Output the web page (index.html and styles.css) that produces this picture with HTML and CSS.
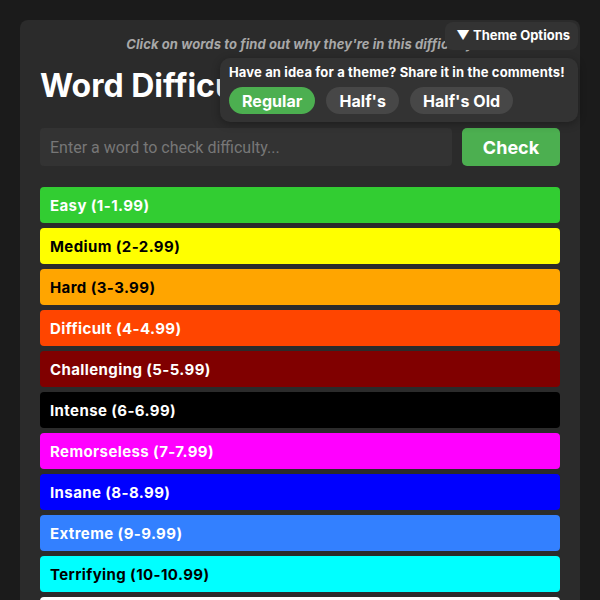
FILE: index.html
```html
<!DOCTYPE html>
<html>
<head>
<meta charset="utf-8">
<link rel="stylesheet" href="styles.css">
</head>
<body>
<div class="container">
  <p class="subtitle">Click on words to find out why they're in this difficulty</p>
  <h1 class="title">Word Difficulty</h1>
  <div class="search">
    <input class="search-input" type="text" placeholder="Enter a word to check difficulty...">
    <button class="check-btn">Check</button>
  </div>
  <div class="levels">
    <div class="level easy">Easy (1-1.99)</div>
    <div class="level medium">Medium (2-2.99)</div>
    <div class="level hard">Hard (3-3.99)</div>
    <div class="level difficult">Difficult (4-4.99)</div>
    <div class="level challenging">Challenging (5-5.99)</div>
    <div class="level intense">Intense (6-6.99)</div>
    <div class="level remorseless">Remorseless (7-7.99)</div>
    <div class="level insane">Insane (8-8.99)</div>
    <div class="level extreme">Extreme (9-9.99)</div>
    <div class="level terrifying">Terrifying (10-10.99)</div>
    <div class="level next">Unforgiving (11-11.99)</div>
  </div>
  <div class="theme-toggle">&#9660; Theme Options</div>
  <div class="theme-panel">
    <p class="theme-note">Have an idea for a theme? Share it in the comments!</p>
    <div class="theme-buttons">
      <button class="theme-btn active">Regular</button>
      <button class="theme-btn">Half's</button>
      <button class="theme-btn">Half's Old</button>
    </div>
  </div>
</div>
</body>
</html>
```
FILE: styles.css
```css
html, body {
  margin: 0;
  padding: 0;
  background: #1b1b1b;
  height: 600px;
  overflow: hidden;
}
body {
  padding: 20px 20px 0;
  font-family: Inter, "Noto Sans", sans-serif;
}
.container {
  position: relative;
  background: #2b2b2b;
  border-radius: 8px;
  padding: 14px 20px 20px;
}
.subtitle {
  margin: 0;
  text-align: center;
  font-size: 13px;
  line-height: 20px;
  font-weight: 700;
  font-style: italic;
  color: #a8a8a8;
  letter-spacing: 0.1px;
}
.title {
  margin: 12px 0 0;
  font-size: 32px;
  line-height: 40px;
  font-weight: 700;
  color: #ffffff;
  white-space: nowrap;
}
.search {
  display: flex;
  gap: 10px;
  margin-top: 22px;
}
.search-input {
  flex: 1;
  height: 38px;
  box-sizing: border-box;
  border: none;
  border-radius: 4px;
  background: #333333;
  padding: 0 10px;
  font-family: Roboto, sans-serif;
  font-size: 16px;
  color: #ddd;
  outline: none;
}
.search-input::placeholder {
  color: #777777;
}
.check-btn {
  width: 98px;
  height: 38px;
  border: none;
  border-radius: 5px;
  background: #4caf50;
  color: #fff;
  font-family: Inter, sans-serif;
  font-weight: 700;
  font-size: 18px;
}
.levels {
  display: flex;
  flex-direction: column;
  gap: 5px;
  margin-top: 21px;
}
.level {
  height: 36px;
  border-radius: 4px;
  padding: 0 10px;
  display: flex;
  align-items: center;
  font-size: 15px;
  font-weight: 700;
  letter-spacing: 0.4px;
  color: #fff;
}
.easy { background: #32cd32; }
.medium { background: #ffff00; color: #000; }
.hard { background: #ffa500; color: #000; }
.difficult { background: #ff4500; }
.challenging { background: #800000; }
.intense { background: #000000; }
.remorseless { background: #ff00ff; }
.insane { background: #0000ff; }
.extreme { background: #3380ff; }
.terrifying { background: #00ffff; color: #000; }
.next { background: #ffffff; color: #000; }

.theme-toggle {
  position: absolute;
  top: 2px;
  right: 2px;
  height: 28px;
  box-sizing: border-box;
  padding: 0 8px 2px 11px;
  display: flex;
  align-items: center;
  background: #333333;
  border-radius: 8px;
  color: #fff;
  font-size: 13px;
  font-weight: 700;
}
.theme-panel {
  position: absolute;
  top: 38px;
  right: 2px;
  width: 358px;
  box-sizing: border-box;
  padding: 6px 9px 8px;
  background: #333333;
  border-radius: 10px;
  box-shadow: 0 2px 8px rgba(0,0,0,0.3);
}
.theme-note {
  margin: 0;
  font-size: 13px;
  line-height: 16px;
  font-weight: 700;
  letter-spacing: 0.15px;
  white-space: nowrap;
  color: #fff;
}
.theme-buttons {
  display: flex;
  gap: 11px;
  margin-top: 7px;
}
.theme-btn {
  height: 27px;
  border: none;
  border-radius: 14px;
  padding: 0 13px;
  background: #474747;
  color: #fff;
  font-family: Inter, sans-serif;
  font-size: 16px;
  letter-spacing: 0.05px;
  font-weight: 700;
}
.theme-btn.active {
  background: #4caf50;
}
```
